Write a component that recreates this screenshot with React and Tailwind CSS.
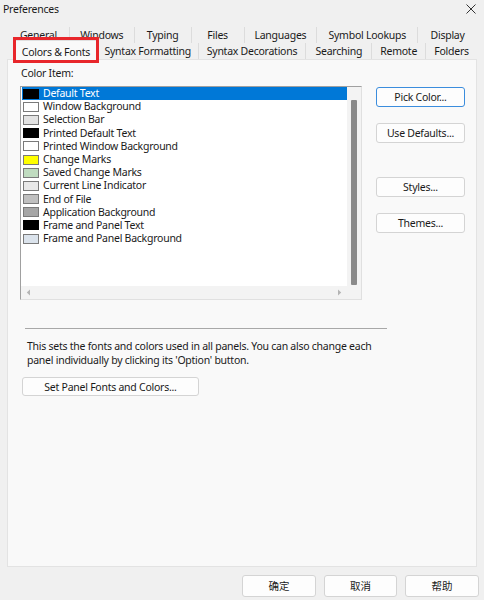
import React from "react";

const items = [
  { name: "Default Text", color: "#000000", border: "#000000" },
  { name: "Window Background", color: "#ffffff", border: "#7a7a7a" },
  { name: "Selection Bar", color: "#e3e3e3", border: "#7a7a7a" },
  { name: "Printed Default Text", color: "#000000", border: "#000000" },
  { name: "Printed Window Background", color: "#ffffff", border: "#7a7a7a" },
  { name: "Change Marks", color: "#ffff00", border: "#7a7a7a" },
  { name: "Saved Change Marks", color: "#c0dcc0", border: "#7a7a7a" },
  { name: "Current Line Indicator", color: "#e8e8e8", border: "#7a7a7a" },
  { name: "End of File", color: "#c0c0c0", border: "#7a7a7a" },
  { name: "Application Background", color: "#a6a6a6", border: "#7a7a7a" },
  { name: "Frame and Panel Text", color: "#000000", border: "#000000" },
  { name: "Frame and Panel Background", color: "#dbe3ec", border: "#7a7a7a" },
];

const row1 = [
  { t: "General", w: "w-[62px]" },
  { t: "Windows", w: "w-[65px]" },
  { t: "Typing", w: "w-[57px]" },
  { t: "Files", w: "w-[53px]" },
  { t: "Languages", w: "w-[73px]" },
  { t: "Symbol Lookups", w: "w-[101px]" },
  { t: "Display", w: "w-[59px]" },
];

const row2 = [
  { t: "Syntax Formatting", w: "w-[101px]" },
  { t: "Syntax Decorations", w: "w-[108px]" },
  { t: "Searching", w: "w-[66px]" },
  { t: "Remote", w: "w-[54px]" },
  { t: "Folders", w: "w-[51px]" },
];

function Btn({ children, className = "" }) {
  return (
    <div
      className={
        "flex items-center justify-center bg-[#fdfdfd] border rounded-[3px] " +
        className
      }
    >
      {children}
    </div>
  );
}

export default function App() {
  return (
    <div className="relative w-[484px] h-[600px] bg-[#f0f0f0] flex flex-col font-['Noto_Sans',sans-serif] text-[10.5px] tracking-[-0.25px] text-[#1a1a1a] leading-[14px] overflow-hidden">
      {/* Title bar */}
      <div className="h-[18px] flex items-center justify-between pl-[3px] pr-[8px]">
        <span className="text-[10.5px]">Preferences</span>
        <svg width="10" height="10" viewBox="0 0 10 10">
          <path d="M0.5 0.5 L9.5 9.5 M9.5 0.5 L0.5 9.5" stroke="#333" strokeWidth="1" />
        </svg>
      </div>

      {/* Tabs */}
      <div className="mt-[9px] px-[7px]">
        <div className="h-[16px] flex ml-[1px]">
          {row1.map((r, i) => (
            <div
              key={r.t}
              className={
                r.w +
                " flex items-center justify-center " +
                (i < row1.length - 1 ? "border-r border-[#dcdcdc]" : "")
              }
            >
              {r.t}
            </div>
          ))}
        </div>
        <div className="h-[16px] flex ml-[7px] relative">
          <div className="w-[84px] h-[20px] -mt-[3px] flex items-center justify-center bg-[#f9f9f9] border border-b-0 border-[#e0e0e0] relative z-10 pt-[2px]">
            Colors &amp; Fonts
          </div>
          {row2.map((r, i) => (
            <div
              key={r.t}
              className={
                r.w +
                " flex items-center justify-center " +
                (i < row2.length - 1 ? "border-r border-[#dcdcdc]" : "")
              }
            >
              {r.t}
            </div>
          ))}
        </div>
      </div>

      {/* Panel */}
      <div className="mx-[7px] h-[508px] bg-[#f9f9f9] border border-[#e3e3e3] pl-[12px] pt-[6px]">
        <div className="ml-[1px] h-[14px] leading-[14px]">Color Item:</div>
        <div className="flex mt-[6px]">
          {/* Listbox */}
          <div className="w-[342px] h-[214px] border border-[#a0a0a0] border-r-[#e0e0e0] border-b-[#e0e0e0] bg-white grid grid-cols-[1fr_14px] grid-rows-[1fr_13px]">
            <div className="pt-0 overflow-hidden">
              {items.map((it, i) => (
                <div
                  key={it.name}
                  className={
                    "h-[13.2px] flex items-center ml-[1px] " +
                    (i === 0 ? "bg-[#0078d7] text-white" : "")
                  }
                >
                  <div
                    className="w-[16px] h-[10px] ml-[1px] border"
                    style={{ backgroundColor: it.color, borderColor: it.border }}
                  />
                  <span className="ml-[4px] leading-[13px]">{it.name}</span>
                </div>
              ))}
            </div>
            <div className="bg-[#f3f3f3] flex justify-center pt-[13px]">
              <div className="w-[6px] h-[185px] bg-[#8a8a8a] rounded-[1px]" />
            </div>
            <div className="bg-[#f3f3f3] flex items-center justify-between px-[5px]">
              <svg width="5" height="7" viewBox="0 0 5 7">
                <path d="M4 0.5 L0.8 3.5 L4 6.5 Z" fill="#b4b4b4" />
              </svg>
              <svg width="5" height="7" viewBox="0 0 5 7">
                <path d="M1 0.5 L4.2 3.5 L1 6.5 Z" fill="#b4b4b4" />
              </svg>
            </div>
            <div className="bg-[#f3f3f3]" />
          </div>

          {/* Right buttons */}
          <div className="ml-[14px] w-[89px] flex flex-col">
            <Btn className="mt-[1px] h-[20px] border-[#3b8ddd]">Pick Color...</Btn>
            <Btn className="mt-[16px] h-[20px] border-[#d4d4d4]">Use Defaults...</Btn>
            <Btn className="mt-[34px] h-[20px] border-[#d4d4d4]">Styles...</Btn>
            <Btn className="mt-[16px] h-[20px] border-[#d4d4d4]">Themes...</Btn>
          </div>
        </div>

        <div className="mt-[28px] ml-[5px] w-[362px] border-t border-[#a8a8a8]" />
        <div className="mt-[10px] ml-[7px] leading-[14px]">
          <div>This sets the fonts and colors used in all panels. You can also change each</div>
          <div>panel individually by clicking its 'Option' button.</div>
        </div>
        <Btn className="mt-[10px] ml-[2px] w-[177px] h-[19px] border-[#d4d4d4]">
          Set Panel Fonts and Colors...
        </Btn>
      </div>

      {/* Bottom buttons */}
      <div className="mt-[8px] flex justify-end gap-[8px] pr-[5px] tracking-normal font-['Noto_Sans_CJK_SC',sans-serif]">
        <Btn className="w-[74px] h-[22px] border-[#d4d4d4]">确定</Btn>
        <Btn className="w-[73px] h-[22px] border-[#d4d4d4]">取消</Btn>
        <Btn className="w-[74px] h-[22px] border-[#d4d4d4]">帮助</Btn>
      </div>

      {/* Red annotation box */}
      <div className="absolute left-[13px] top-[37px] w-[86px] h-[26px] border-[3px] border-[#e8262b] z-20 pointer-events-none" />
    </div>
  );
}
